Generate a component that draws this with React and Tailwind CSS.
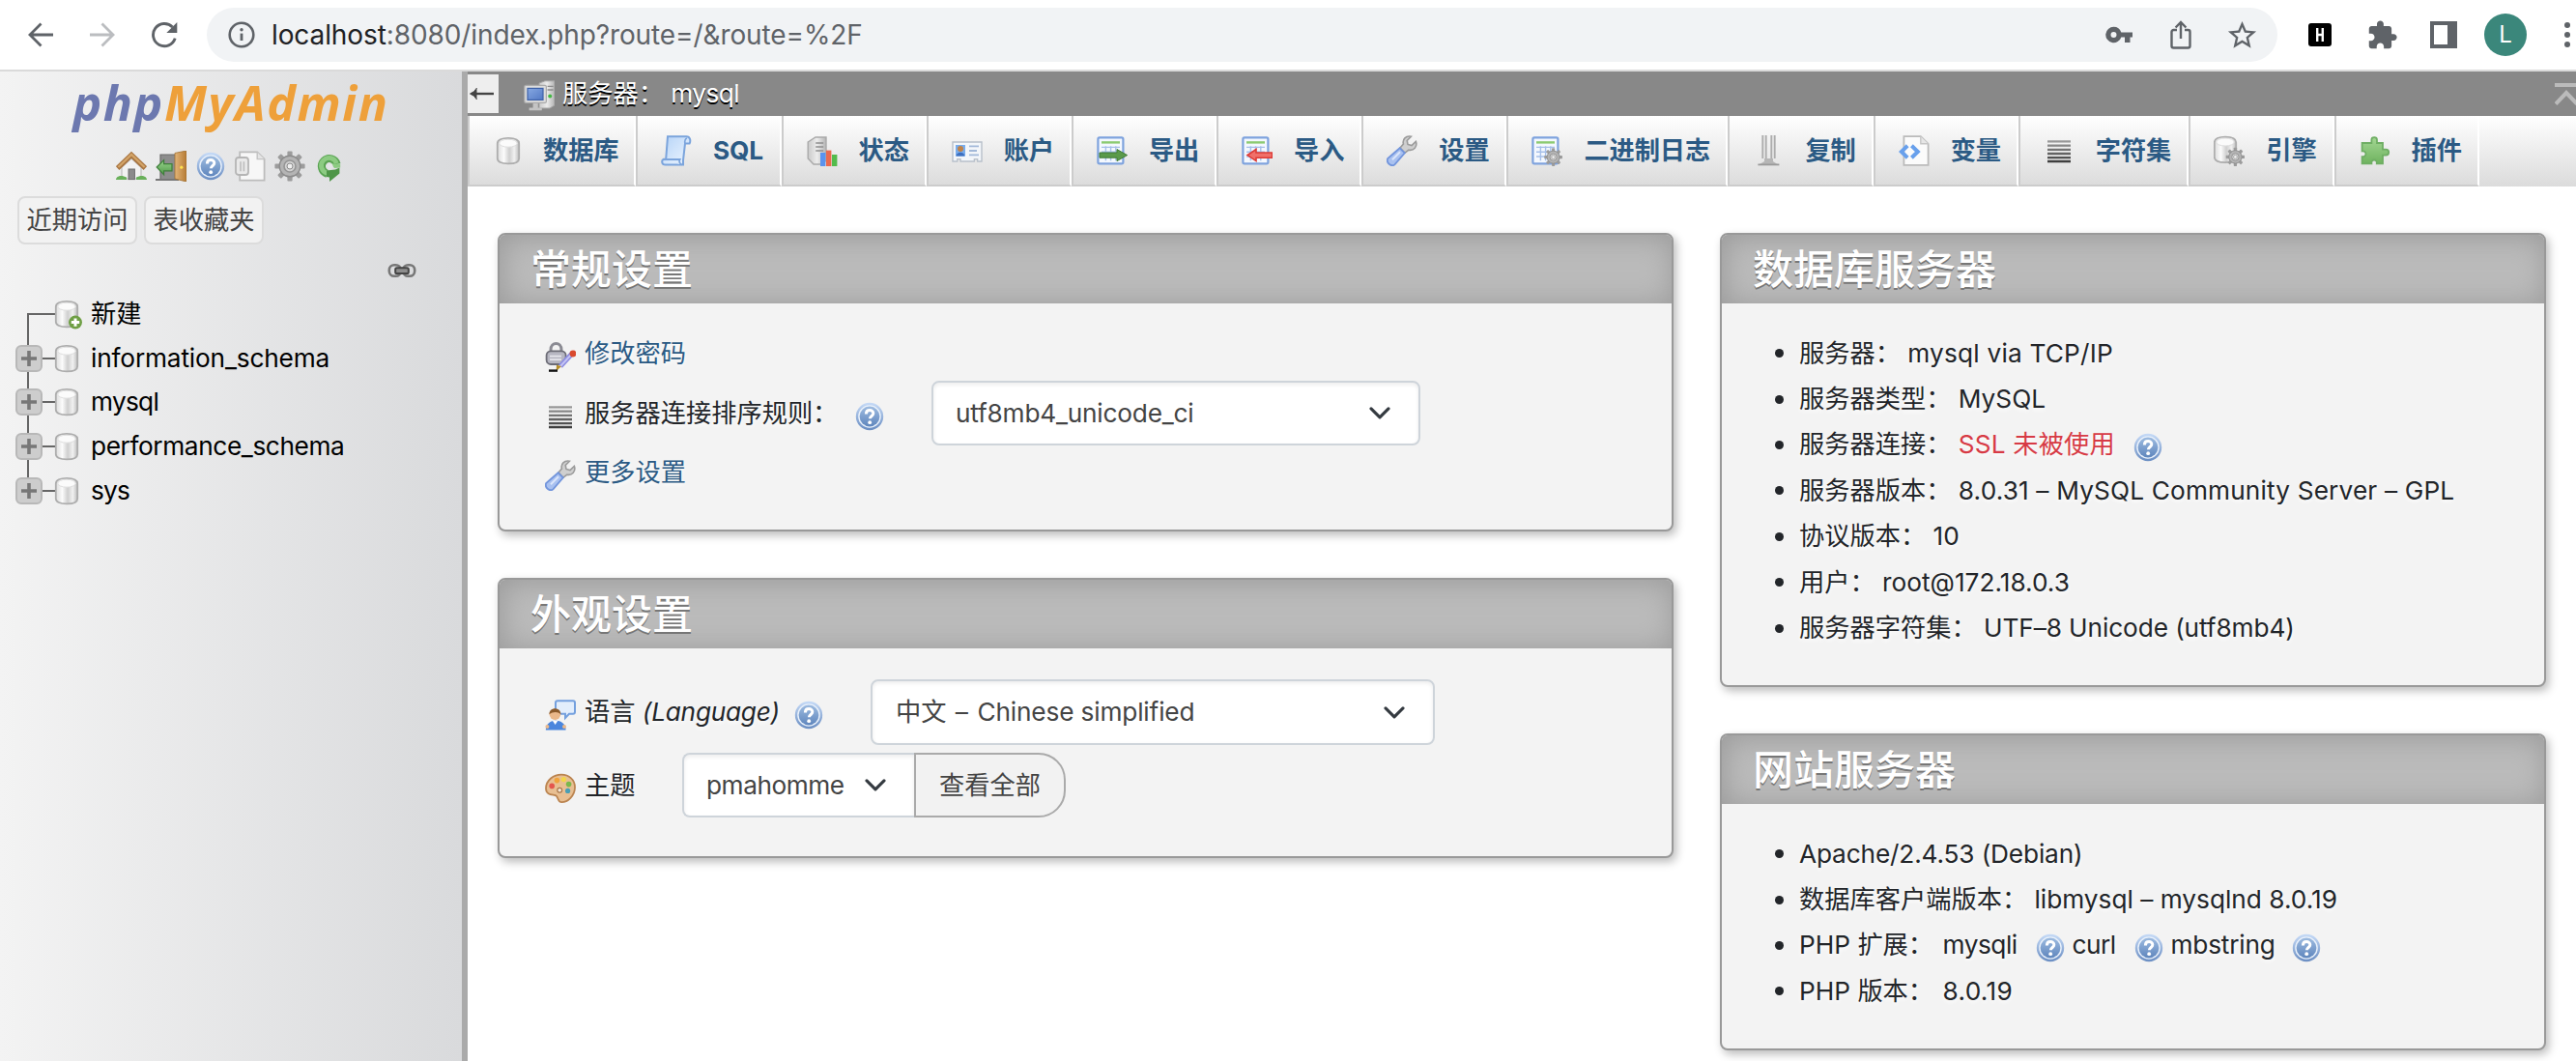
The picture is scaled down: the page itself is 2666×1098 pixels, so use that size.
import React from 'react';

const FONT = "font-[Inter,'Noto_Sans_CJK_SC',sans-serif]";

/* ---------- icon primitives (16 unit grid shown at 32px) ---------- */

function Icon({ children, className = '' }) {
  return (
    <svg viewBox="0 0 16 16" className={`h-8 w-8 shrink-0 ${className}`} fill="none">
      {children}
    </svg>
  );
}

function Defs() {
  return (
    <svg width="0" height="0" className="absolute">
      <defs>
        <linearGradient id="cyl" x1="0" x2="1" y1="0" y2="0">
          <stop offset="0" stopColor="#dcdcdc" />
          <stop offset=".3" stopColor="#fbfbfb" />
          <stop offset=".55" stopColor="#cfcfcf" />
          <stop offset=".78" stopColor="#f1f1f1" />
          <stop offset="1" stopColor="#bdbdbd" />
        </linearGradient>
        <linearGradient id="helpFill" x1="0" x2="0" y1="0" y2="1">
          <stop offset="0" stopColor="#9dbbe0" />
          <stop offset="1" stopColor="#5f86bd" />
        </linearGradient>
        <linearGradient id="helpRing" x1="0" x2="0" y1="0" y2="1">
          <stop offset="0" stopColor="#c3d8f5" />
          <stop offset="1" stopColor="#6d90c4" />
        </linearGradient>
        <linearGradient id="blueSheet" x1="0" x2="1" y1="0" y2="1">
          <stop offset="0" stopColor="#b5d3f7" />
          <stop offset="1" stopColor="#eef6ff" />
        </linearGradient>
        <linearGradient id="grayBox" x1="0" x2="1" y1="0" y2="0">
          <stop offset="0" stopColor="#c9c9c9" />
          <stop offset=".5" stopColor="#ececec" />
          <stop offset="1" stopColor="#b4b4b4" />
        </linearGradient>
        <linearGradient id="lines" x1="0" x2="0" y1="2" y2="14" gradientUnits="userSpaceOnUse">
          <stop offset="0" stopColor="#a2a2a2" />
          <stop offset="1" stopColor="#3c3c3c" />
        </linearGradient>
        <linearGradient id="door" x1="0" x2="1" y1="0" y2="0">
          <stop offset="0" stopColor="#e3b67a" />
          <stop offset="1" stopColor="#b57a33" />
        </linearGradient>
        <linearGradient id="green" x1="0" x2="0" y1="0" y2="1">
          <stop offset="0" stopColor="#9bd48f" />
          <stop offset="1" stopColor="#4f9a48" />
        </linearGradient>
        <linearGradient id="plugin" x1="0" x2="0" y1="0" y2="1">
          <stop offset="0" stopColor="#a3d693" />
          <stop offset="1" stopColor="#6fb35f" />
        </linearGradient>
        <linearGradient id="screen" x1="0" x2="1" y1="0" y2="1">
          <stop offset="0" stopColor="#86a8e2" />
          <stop offset="1" stopColor="#5379c4" />
        </linearGradient>
      </defs>
    </svg>
  );
}

const Cylinder = () => (
  <>
    <path d="M2.4 4.200C2.400 2.400 4.600 1.400 8 1.400s5.600 1 5.600 2.800v7.800c0 1.800-2.200 2.700-5.600 2.700S2.400 13.800 2.400 12z" fill="url(#cyl)" stroke="#adadad" strokeWidth=".9" />
    <ellipse cx="8" cy="4.100" rx="4.600" ry="2" fill="#fbfbfb" stroke="#dedede" strokeWidth=".5" />
  </>
);

const Gear = ({ cx = 8, cy = 8, r = 5 }) => (
  <g transform={`translate(${cx} ${cy}) scale(${r / 5})`}>
    {[0, 45, 90, 135].map((a) => (
      <rect key={a} x="-1.300" y="-7.800" width="2.600" height="15.600" rx=".5" transform={`rotate(${a})`} fill="#9c9c9c" />
    ))}
    <circle r="5.400" fill="#b4b4b4" stroke="#8c8c8c" strokeWidth=".7" />
    <circle r="3" fill="#d2d2d2" stroke="#959595" strokeWidth=".8" />
    <circle r="1.500" fill="#f0f0f0" stroke="#8a8a8a" strokeWidth=".5" />
  </g>
);

const DbIcon = () => <Icon><Cylinder /></Icon>;

const NewDbIcon = () => (
  <Icon>
    <Cylinder />
    <circle cx="12.500" cy="12.300" r="3.500" fill="#6f9f45" />
    <path d="M12.500 10.200v4.200M10.400 12.300h4.200" stroke="#fff" strokeWidth="1.500" />
  </Icon>
);

const HelpIcon = ({ className }) => (
  <Icon className={className}>
    <circle cx="8" cy="8" r="6.500" fill="#e9f1fb" stroke="url(#helpRing)" strokeWidth="1.200" />
    <circle cx="8" cy="8" r="5.200" fill="url(#helpFill)" />
    <path d="M6.200 6.700c0-2.600 3.700-2.400 3.700-.3 0 1.300-1.700 1.400-1.700 2.700" stroke="#fff" strokeWidth="1.500" />
    <circle cx="8.100" cy="11.100" r=".95" fill="#fff" />
  </Icon>
);

const HomeIcon = () => (
  <Icon>
    <path d="M3 8.500 8 4l5 4.500v6H3z" fill="#f2f2f2" stroke="#bdbdbd" strokeWidth=".6" />
    <rect x="6.500" y="9.500" width="3.200" height="5.300" fill="#8b8b8b" stroke="#6d6d6d" strokeWidth=".5" />
    <path d="M.8 9 8 2.200 15.200 9" stroke="#a87440" strokeWidth="2.600" />
    <path d="M1.200 8.500 8 2l6.800 6.500" stroke="#d3a468" strokeWidth="1.200" />
    <path d="M0 15c0-2 3-2.800 5.500-1.200V15zM16 15c0-2-3-2.800-5.500-1.200V15z" fill="#69b05a" />
  </Icon>
);

const ExitIcon = () => (
  <Icon>
    <path d="M2.500 2h8v13h-8z" fill="#8d8d8d" stroke="#6a6a6a" strokeWidth=".6" />
    <path d="M0 15h12" stroke="#777" />
    <path d="M10 1.200 16 0v16l-6-1.500z" fill="url(#door)" stroke="#a06d2d" strokeWidth=".4" />
    <circle cx="13.400" cy="8.600" r=".8" fill="#ffe14d" />
    <path d="M.6 8.500 4.300 4.800v2h4.200v3.600H4.300v2z" fill="url(#green)" stroke="#3f7f3b" strokeWidth=".6" />
  </Icon>
);

const DocIcon = () => (
  <Icon>
    <path d="M2.600.7h9l3.700 3.600v11H2.600z" fill="#f7f7f7" stroke="#bcbcbc" strokeWidth=".9" />
    <path d="M11.600.7v3.600h3.700" fill="#e4e4e4" stroke="#c4c4c4" strokeWidth=".7" />
    <rect x=".5" y="3.500" width="6.500" height="9" rx="1.500" fill="#e9e9e9" stroke="#b5b5b5" strokeWidth=".9" />
    <path d="M3 5.600v5M4.700 5.600v5" stroke="#bdbdbd" strokeWidth=".8" />
  </Icon>
);

const GearIcon = () => <Icon><Gear /></Icon>;

const ReloadGreen = () => (
  <Icon>
    <path d="M11.800 7A4 4 0 1 0 6.800 11.900" stroke="#5aa353" strokeWidth="4" />
    <path d="M11.600 6.600A4 4 0 1 0 6.800 11.600" stroke="#8ccb82" strokeWidth="2.400" />
    <path d="M6.500 10.200 11 9.700l2.200-.9v3L8 16v-2.300l-1.500-.2z" fill="#4f9648" />
    <path d="M8.500 6.800h5.100v1.900l-3 .3z" fill="#8ccb82" />
    <circle cx="8.300" cy="8.100" r="1.500" fill="#e4e5e7" />
  </Icon>
);

const LinkIcon = () => (
  <Icon>
    <rect x="1.400" y="5.100" width="6" height="5.800" rx="2.600" stroke="#777" strokeWidth="1.300" />
    <rect x="8.600" y="5.100" width="6" height="5.800" rx="2.600" stroke="#777" strokeWidth="1.300" />
    <rect x="4.600" y="6.600" width="6.800" height="2.900" rx=".8" fill="#8d8d8d" stroke="#444" strokeWidth="1" />
  </Icon>
);

const ServerIcon = () => (
  <Icon>
    <path d="M8 1.500 11 .4h5V13l-2.500 1.500H8z" fill="url(#grayBox)" stroke="#a3a3a3" strokeWidth=".5" />
    <path d="M12.300 3.200h3M12.300 5h3" stroke="#8d8d8d" strokeWidth=".7" />
    <circle cx="13.600" cy="8.200" r="1" fill="#43b843" />
    <rect x=".4" y="2.700" width="11.300" height="9" rx=".7" fill="#dcdcdc" stroke="#ababab" strokeWidth=".6" />
    <rect x="2" y="4.200" width="8" height="6" fill="url(#screen)" stroke="#3e62a8" strokeWidth=".6" />
    <path d="M4.800 12h2.600v2.300h2v1.300H2.800v-1.300h2z" fill="#c4c4c4" />
  </Icon>
);

const SqlIcon = () => (
  <Icon>
    <path d="M3.500.6h9.700c2 0 2.300 2.300 1.600 3.700h-2.300l-1 8.600v2.400H2.300C.3 15.300.2 13 1.300 12.400h1.300z" fill="url(#blueSheet)" stroke="#7ba4dc" strokeWidth="1" />
    <path d="M1.500 12.500h8.300c-.6 1 0 2.500 1 2.700" fill="#dbeafc" stroke="#7ba4dc" strokeWidth=".9" />
    <path d="M12.500 4.300c-.4-1.500.2-2.600 1-2.800" stroke="#7ba4dc" strokeWidth=".8" />
  </Icon>
);

const StatusIcon = () => (
  <Icon>
    <path d="M.6 3.500 4.500 1h5.500v12L8 15H3.500L.6 12z" fill="url(#grayBox)" stroke="#a9a9a9" strokeWidth=".7" />
    <path d="M4.600 4h4M4.600 6h4M4.600 8h4" stroke="#8f8f8f" strokeWidth=".8" />
    <rect x="7" y="9" width="2.700" height="7" fill="#5b93ee" />
    <rect x="10" y="7.800" width="2.700" height="8.200" fill="#ea6a4f" />
    <rect x="13" y="10" width="2.700" height="6" fill="#53bb4c" />
  </Icon>
);

const UserCardIcon = () => (
  <Icon>
    <path d="M.5 3.500h15v10h-2.200v-1.200h-1.600v1.200H4.500v-1.200H2.900v1.200H.5z" fill="#f3f6fa" stroke="#b8c0ca" strokeWidth=".7" />
    <rect x="2" y="5" width="5" height="5.800" fill="#78acec" />
    <circle cx="4.500" cy="7" r="1.500" fill="#c08348" />
    <path d="M2.300 10.800c0-2.600 4.400-2.600 4.400 0z" fill="#3d6fc0" />
    <path d="M9 5.700h5M9 8h4M9 10.200h5" stroke="#a3b9d9" strokeWidth=".9" />
  </Icon>
);

const Sheet = () => (
  <>
    <rect x=".7" y="1.200" width="13" height="13.500" rx=".8" fill="#f4f8fe" stroke="#7fa3de" strokeWidth="1.100" />
    <path d="M2.500 3.700h9.500" stroke="#8ccb72" strokeWidth="1.200" />
    <path d="M2.500 6.200h9.500M2.500 8.600h9.500M2.500 11h9.500M4.700 5.600v7.500M7.300 5.600v7.500M9.900 5.600v7.500" stroke="#a5bfe9" strokeWidth=".7" />
  </>
);

const ExportIcon = () => (
  <Icon>
    <Sheet />
    <path d="M1.500 9h9V7.300L15.800 10.300l-5.300 3v-1.700h-9z" fill="#5a9a4a" stroke="#3f7a35" strokeWidth=".5" />
  </Icon>
);

const ImportIcon = () => (
  <Icon>
    <Sheet />
    <path d="M15.800 9H7.500V7.300L3 10.300l4.500 3v-1.700h8.300z" fill="#f0706a" stroke="#dd3b36" strokeWidth=".8" />
  </Icon>
);

const WrenchIcon = () => (
  <Icon>
    <path d="M15.200 3.200 13 5.300l-2-.6-.4-2L12.700.6c-2.700-.6-4.600 1.500-4 3.900L7 6.500l2.500 2.600 2-1.500c2.500.5 4.600-1.700 3.700-4.400z" fill="#cfcfcf" stroke="#9b9b9b" strokeWidth=".8" />
    <path d="M6.800 6.600 9.400 9.200 4.200 15.200c-1.500 1.200-4.600-.6-3.600-3.200z" fill="#a9c1f0" stroke="#7295dc" strokeWidth=".9" />
    <path d="M3 12.600 7 8.600" stroke="#dbe6fb" strokeWidth="1" />
  </Icon>
);

const BinlogIcon = () => (
  <Icon><Sheet /><Gear cx={11.300} cy={11.300} r={3} /></Icon>
);

const ReplicationIcon = () => (
  <Icon>
    <path d="M6 0v12M10.500 0v12" stroke="#a8a8a8" strokeWidth="2.600" />
    <path d="M6 0v12M10.500 0v12" stroke="#dedede" strokeWidth="1.100" />
    <path d="M6 12h4.500v1.500l3 2H2.700l3.300-2z" fill="#b6b6b6" />
    <path d="M2.700 15.200h11" stroke="#9a9a9a" strokeWidth=".9" />
  </Icon>
);

const VariablesIcon = () => (
  <Icon>
    <path d="M2.700.6h8.700l3.900 3.800v11H2.700z" fill="#fbfbfb" stroke="#bbb" strokeWidth=".9" />
    <path d="M11.400.6v3.800h3.900" fill="#e6e6e6" stroke="#c6c6c6" strokeWidth=".7" />
    <path d="M4.600 5.400 1.400 8.500l3.200 3.100M6.700 5.400l3.200 3.100-3.200 3.100" stroke="#68a0ec" strokeWidth="2" />
  </Icon>
);

const LinesIcon = () => (
  <Icon>
    <path d="M2 3.200h12M2 5.300h12M2 7.400h12M2 9.500h12M2 11.600h12M2 13.500h12" stroke="url(#lines)" strokeWidth="1.150" />
  </Icon>
);

const EngineIcon = () => (
  <Icon>
    <g transform="translate(-2 -.6)"><Cylinder /></g>
    <Gear cx={11.200} cy={11.200} r={3.100} />
  </Icon>
);

const PluginIcon = () => (
  <Icon>
    <path d="M5 4h1.200V2.300C6.200.6 9 .6 9 2.300V4h3v3.300h1.600c2 0 2 3 0 3H12V14.700H8.900c.4-2.600-3.100-2.600-2.700 0H1.300v-3.600c2.600.3 2.600-3.200 0-2.900V4z" fill="url(#plugin)" stroke="#6fae64" strokeWidth=".9" />
  </Icon>
);

const PasswordIcon = () => (
  <Icon>
    <path d="M3 6.500V4.500C3 .2 8.500.2 8.500 4.500v2" stroke="#8b8b93" strokeWidth="1.500" />
    <rect x=".8" y="5.200" width="10" height="6.800" rx="2.200" fill="#b7b7c2" stroke="#6c6c76" strokeWidth=".9" />
    <path d="M2.500 7.800h6M2.500 9.600h6" stroke="#e6e6ec" strokeWidth=".9" />
    <path d="M14.200 6.300 8 13" stroke="#8c8ce0" strokeWidth="2.600" />
    <path d="M14.200 6.300 8 13" stroke="#c5c5f4" strokeWidth="1" />
    <circle cx="14.500" cy="6.500" r="1.700" fill="#d9492e" />
    <path d="M6 12.400 8.500 13 5.800 15.600z" fill="#b58b24" />
    <path d="M2 15.300h4.500" stroke="#111" strokeWidth="1.200" />
  </Icon>
);

const LanguageIcon = () => (
  <Icon>
    <path d="M6.500.6h8c.7 0 1 .3 1 1v4.800c0 .7-.3 1-1 1h-2L10.500 9.500V7.400h-4c-.7 0-1-.3-1-1V1.600c0-.7.3-1 1-1z" fill="#e3eefc" stroke="#74a0de" strokeWidth="1" />
    <circle cx="5.200" cy="7.600" r="2.900" fill="#eab88a" />
    <path d="M2.200 7.600c0-4 6-4 6 0-1.500-1.500-4-1.500-6 0z" fill="#8a5a2b" />
    <path d="M.4 15.800c0-6.500 10.400-6.500 10.400 0z" fill="#4b86dd" />
    <path d="M4 11h2.600l-1.300 2z" fill="#fff" />
    <circle cx="1.200" cy="14" r="1" fill="#eab88a" /><circle cx="10" cy="14" r="1" fill="#eab88a" />
  </Icon>
);

const PaletteIcon = () => (
  <Icon>
    <path d="M8.500.8c4 0 7.100 2.700 7 6.700-.1 4.300-3.700 7.600-6.800 7.600-2.200 0-1.700-2.200-2.700-3.200S.5 12 .5 7.900C.6 3.600 4.500.8 8.500.8z" fill="#e8bf92" stroke="#bb8450" strokeWidth=".9" />
    <circle cx="3.600" cy="6.700" r="1.400" fill="#e4554d" />
    <circle cx="6.200" cy="3.800" r="1.400" fill="#f0a33c" />
    <circle cx="9.700" cy="3.300" r="1.300" fill="#f2d648" />
    <circle cx="12.300" cy="5.800" r="1.400" fill="#79b84c" />
    <circle cx="11.800" cy="9.200" r="1.300" fill="#4a9fb5" />
    <circle cx="7.600" cy="8.900" r="1.200" fill="#f6ead9" stroke="#a9764a" strokeWidth=".6" />
  </Icon>
);

/* ---------- browser toolbar ---------- */

function BrowserBar() {
  return (
    <div className="flex h-[74px] shrink-0 items-center border-b-2 border-[#dadada] bg-white text-[#5f6368]">
      <svg viewBox="0 0 26 26" className="ml-[29px] h-[26px] w-[26px]" fill="none" stroke="#5f6368" strokeWidth="2.800">
        <path d="M26 13H2.500M13.500 1.500 2 13l11.500 11.500" />
      </svg>
      <svg viewBox="0 0 26 26" className="ml-[38px] h-[26px] w-[26px]" fill="none" stroke="#bbbdc0" strokeWidth="2.800">
        <path d="M0 13h23.500M12.500 1.500 24 13 12.500 24.500" />
      </svg>
      <svg viewBox="0 0 28 28" className="ml-[37px] h-7 w-7" fill="none">
        <path d="M25.200 17.600A11.600 11.600 0 1 1 22.500 6.100" stroke="#5f6368" strokeWidth="2.900" />
        <path d="M27.300 1v11H16.300z" fill="#5f6368" />
      </svg>
      <div className="ml-[30px] flex h-14 w-[2143px] items-center rounded-full bg-[#f1f3f5]">
        <svg viewBox="0 0 28 28" className="ml-[22px] h-7 w-7" fill="none">
          <circle cx="14" cy="14" r="12.300" stroke="#5f6368" strokeWidth="2.600" />
          <path d="M14 12.600v7.400" stroke="#5f6368" strokeWidth="2.800" />
          <circle cx="14" cy="8.800" r="1.700" fill="#5f6368" />
        </svg>
        <div className="ml-[17px] flex-1 whitespace-pre text-[28px] leading-8 tracking-[-0.1px] text-[#5f6368]"><span className="text-[#202124]">localhost</span>:8080/index.php?route=/&amp;route=%2F</div>
        <svg viewBox="0 0 28 18" className="h-[18px] w-7" fill="#5f6368">
          <path fillRule="evenodd" d="M8.500.8a8.200 8.200 0 0 1 7.800 5.600H28v5h-2.500V17H20v-5.600h-3.700A8.200 8.200 0 1 1 8.500.8zm0 5.200a3 3 0 1 0 0 6 3 3 0 0 0 0-6z" />
        </svg>
        <svg viewBox="0 0 22 30" className="ml-[39px] h-[30px] w-[22px]" fill="none" stroke="#5f6368" strokeWidth="2.400">
          <path d="M7 10H3.500a2 2 0 0 0-2 2v14.500a2 2 0 0 0 2 2h15a2 2 0 0 0 2-2V12a2 2 0 0 0-2-2H15M11 19V2.500M5.600 7.500 11 2l5.400 5.500" />
        </svg>
        <svg viewBox="0 0 24 24" className="ml-[35px] mr-[19px] h-[35px] w-[35px]" fill="#5f6368">
          <path d="M22 9.240l-7.190-.62L12 2 9.190 8.630 2 9.240l5.460 4.730L5.820 21 12 17.270 18.180 21l-1.630-7.030L22 9.240zM12 15.400l-3.760 2.270 1-4.280-3.320-2.880 4.380-.38L12 6.100l1.710 4.040 4.380.38-3.320 2.880 1 4.280L12 15.400z" />
        </svg>
      </div>
      <div className="ml-8 flex h-6 w-6 items-center justify-center rounded-[3px] bg-black">
        <svg viewBox="0 0 8 14" className="h-[14px] w-2" stroke="#fff" strokeWidth="2.400"><path d="M1.200 0v14M6.800 0v14M1 7h6" /></svg>
      </div>
      <svg viewBox="0 0 24 24" className="ml-[36px] h-[33px] w-[33px]" fill="#5f6368">
        <path d="M20.500 11H19V7c0-1.100-.9-2-2-2h-4V3.500C13 2.120 11.880 1 10.500 1S8 2.120 8 3.500V5H4c-1.100 0-1.990.9-1.990 2v3.800H3.500c1.490 0 2.700 1.210 2.700 2.700s-1.210 2.700-2.700 2.700H2V20c0 1.100.9 2 2 2h3.800v-1.500c0-1.490 1.210-2.700 2.700-2.700 1.490 0 2.700 1.210 2.700 2.700V22H17c1.100 0 2-.9 2-2v-4h1.500c1.380 0 2.500-1.120 2.500-2.500S21.880 11 20.500 11z" />
      </svg>
      <div className="ml-[33px] flex h-7 w-7 items-stretch bg-[#5f6368] p-1 pr-[10px]"><div className="flex-1 bg-white" /></div>
      <div className="ml-7 flex h-11 w-11 items-center justify-center rounded-full bg-[#3b877b] text-[24px] font-normal leading-none text-white">L</div>
      <div className="ml-[39px] flex flex-col gap-1">
        <div className="h-1.5 w-1.5 rounded-full bg-[#5f6368]" />
        <div className="h-1.5 w-1.5 rounded-full bg-[#5f6368]" />
        <div className="h-1.5 w-1.5 rounded-full bg-[#5f6368]" />
      </div>
    </div>
  );
}

/* ---------- navigation sidebar ---------- */

const DATABASES = [
  { name: 'information_schema', cls: 'tracking-[-0.16px]' },
  { name: 'mysql', cls: 'tracking-[-0.7px]' },
  { name: 'performance_schema', cls: 'tracking-[-0.39px]' },
  { name: 'sys', cls: 'tracking-[-0.8px]' },
];

function Sidebar() {
  return (
    <aside className="flex w-[478px] shrink-0 flex-col bg-linear-to-r from-[#f3f3f3] to-[#d9dadc]">
      <div className="flex h-[82px] justify-center">
        <div className="whitespace-nowrap font-['Open_Sans',sans-serif] text-[50px] font-bold italic leading-[64px] tracking-[1.600px]">
          <span className="text-[#6c78af]">php</span><span className="text-[#eea03a]">MyAdmin</span>
        </div>
      </div>
      <div className="ml-[120px] flex gap-[9px]">
        <HomeIcon /><ExitIcon /><HelpIcon /><DocIcon /><GearIcon /><ReloadGreen />
      </div>
      <div className="ml-[18px] mt-[15px] flex gap-[7px] text-[26.240px] text-[#444]">
        {['近期访问', '表收藏夹'].map((t) => (
          <div key={t} className="flex h-[50px] w-[124px] items-center justify-center whitespace-nowrap rounded-lg border-2 border-[#dcdcdc] bg-[#f2f2f2]">{t}</div>
        ))}
      </div>
      <div className="ml-[400px] mt-[11px] h-8"><LinkIcon /></div>
      <div className="mt-[6px] flex flex-col text-[26.240px] leading-8 text-black">
        <div className="flex h-[45.750px] items-center">
          <div className="ml-[28px] flex h-full w-[29px] flex-col">
            <div className="h-[22px]" />
            <div className="flex-1 border-l-2 border-t-2 border-[#666]" />
          </div>
          <div className="-ml-1"><NewDbIcon /></div>
          <div className="ml-[9px]">新建</div>
        </div>
        {DATABASES.map((d, i) => (
          <div key={d.name} className="flex h-[45.750px] items-center">
            <div className="ml-4 flex h-full w-7 flex-col">
              <div className="ml-3 w-0.5 flex-1 bg-[#666]" />
              <div className="flex h-7 w-7 items-center justify-center rounded-[6px] border-2 border-[#b8b8b8] bg-[#cdcdcd]">
                <svg viewBox="0 0 16 16" className="h-4 w-4" stroke="#777" strokeWidth="3.600"><path d="M8 0v16M0 8h16" /></svg>
              </div>
              <div className={i < DATABASES.length - 1 ? 'ml-3 w-0.5 flex-1 bg-[#666]' : 'flex-1'} />
            </div>
            <div className="h-0.5 w-[13px] bg-[#666]" />
            <div className="-ml-1"><DbIcon /></div>
            <div className={`ml-[9px] whitespace-nowrap ${d.cls}`}>{d.name}</div>
          </div>
        ))}
      </div>
    </aside>
  );
}

/* ---------- top tabs ---------- */

const TABS = [
  { label: '数据库', Ic: DbIcon, w: 'w-[174px] border-l-0 pl-6 -indent-0.5' },
  { label: 'SQL', Ic: SqlIcon, w: 'w-[150.500px] pl-6' },
  { label: '状态', Ic: StatusIcon, w: 'w-[150.200px] pl-6' },
  { label: '账户', Ic: UserCardIcon, w: 'w-[150.200px] pl-6' },
  { label: '导出', Ic: ExportIcon, w: 'w-[150.200px] pl-6' },
  { label: '导入', Ic: ImportIcon, w: 'w-[150.200px] pl-6' },
  { label: '设置', Ic: WrenchIcon, w: 'w-[150.200px] pl-6' },
  { label: '二进制日志', Ic: BinlogIcon, w: 'w-[229px] pl-6' },
  { label: '复制', Ic: ReplicationIcon, w: 'w-[150.200px] pl-6' },
  { label: '变量', Ic: VariablesIcon, w: 'w-[150.200px] pl-6' },
  { label: '字符集', Ic: LinesIcon, w: 'w-[176.500px] pl-6' },
  { label: '引擎', Ic: EngineIcon, w: 'w-[150.200px] pl-6' },
  { label: '插件', Ic: PluginIcon, w: 'w-[150.200px] pl-6' },
];

function Tabs() {
  return (
    <nav className="flex h-[73px] bg-linear-to-b from-white to-[#dbdbdb]">
      {TABS.map(({ label, Ic, w }) => (
        <div key={label} className={`flex shrink-0 items-center border-b-2 border-l-2 border-r-2 border-b-[#ccc] border-l-[#ccc] border-r-white ${w}`}>
          <Ic />
          <div className="ml-[22px] whitespace-nowrap text-[26.240px] font-bold leading-8 tracking-[-0.1px] text-[#2b5a84]">{label}</div>
        </div>
      ))}
    </nav>
  );
}

/* ---------- cards ---------- */

function Card({ title, className, children }) {
  return (
    <section className={`flex flex-col overflow-hidden rounded-lg border-2 border-[#999] bg-[#f3f3f3] shadow-[3px_4px_10px_#bbb] ${className}`}>
      <h2 className="flex h-[71px] shrink-0 items-center bg-[#bbb] pl-8 text-[42px] font-medium leading-[48px] text-white shadow-[inset_2px_2px_30px_#999] [text-shadow:0_2px_0_#777]">{title}</h2>
      <div className="flex flex-1 flex-col text-[26.240px] leading-8 text-[#222529] [text-shadow:0_2px_4px_#fff]">{children}</div>
    </section>
  );
}

const Chevron = ({ className = '' }) => (
  <svg viewBox="0 0 24 14" className={`h-[13px] w-[22px] shrink-0 ${className}`} fill="none" stroke="#343a40" strokeWidth="3.400" strokeLinecap="round" strokeLinejoin="round">
    <path d="M2.200 2 12 11.800 21.800 2" />
  </svg>
);

function Select({ children, className }) {
  return (
    <div className={`flex items-center justify-between border-2 border-[#ced4da] bg-white text-[#444] shadow-[inset_0_2px_4px_rgba(0,0,0,0.08)] [text-shadow:none] ${className}`}>
      {children}
    </div>
  );
}

function Bullet({ children }) {
  return (
    <li className="flex h-[47.400px] items-center whitespace-pre">
      <span className="mr-4 h-[9px] w-[9px] rounded-full bg-[#222529]" />
      {children}
    </li>
  );
}

function GeneralCard() {
  return (
    <Card title="常规设置" className="h-[309px]">
      <div className="ml-[47px] mt-[28px] flex h-12 items-center">
        <div className="pt-1.5"><PasswordIcon /></div>
        <span className="ml-[9px] text-[#2b5a84]">修改密码</span>
      </div>
      <div className="ml-[47px] mt-1 flex h-[67px] items-center">
        <div className="pt-1.5"><LinesIcon /></div>
        <span className="ml-[9px] w-[279px] whitespace-nowrap">服务器连接排序规则：</span>
        <HelpIcon className="mt-1.5" />
        <Select className="ml-12 h-[67px] w-[506px] rounded-lg pl-[23px] pr-[29px]">
          <span className="tracking-[-0.2px]">utf8mb4_unicode_ci</span>
          <Chevron />
        </Select>
      </div>
      <div className="ml-[47px] mt-1 flex h-12 items-center">
        <div className="pt-1.5"><WrenchIcon /></div>
        <span className="ml-[9px] text-[#2b5a84]">更多设置</span>
      </div>
    </Card>
  );
}

function AppearanceCard() {
  return (
    <Card title="外观设置" className="mt-12 h-[290px]">
      <div className="ml-[47px] mt-8 flex h-[68px] items-center">
        <div className="pt-1.5"><LanguageIcon /></div>
        <span className="ml-[9px] w-[216px] whitespace-pre">语言 <i className="tracking-[-0.25px]">(Language)</i></span>
        <HelpIcon className="mt-1.5" />
        <Select className="ml-12 h-[68px] w-[584px] rounded-lg pl-6 pr-[29px]">
          <span className="whitespace-pre">中文 <span className="mx-0.5">–</span> <span className="tracking-[-0.15px]">Chinese simplified</span></span>
          <Chevron />
        </Select>
      </div>
      <div className="ml-[47px] mt-2 flex h-[67px] items-center">
        <div className="pt-1.5"><PaletteIcon /></div>
        <span className="ml-[9px] w-[101px]">主题</span>
        <Select className="h-[67px] w-[240px] rounded-l-lg border-r-0 pl-[23px] pr-[29px]">
          <span className="tracking-[-0.45px]">pmahomme</span>
          <Chevron />
        </Select>
        <div className="flex h-[67px] w-[157px] items-center justify-center whitespace-nowrap rounded-r-[28px] border-2 border-[#aaa] bg-[#f2f2f2] text-[#444] [text-shadow:none]">查看全部</div>
      </div>
    </Card>
  );
}

function DatabaseServerCard() {
  return (
    <Card title="数据库服务器" className="h-[470px]">
      <ul className="ml-[55px] mt-[28px] flex flex-col">
        <Bullet>服务器： <span className="tracking-[0.19px]">mysql via TCP/IP</span></Bullet>
        <Bullet>服务器类型： <span>MySQL</span></Bullet>
        <Bullet>服务器连接： <span className="text-[#d73a45] tracking-[0.15px]">SSL 未被使用</span><HelpIcon className="ml-[18px] mt-1.5" /></Bullet>
        <Bullet>服务器版本： <span className="tracking-[0.15px]">8.0.31 – MySQL Community Server – GPL</span></Bullet>
        <Bullet>协议版本： <span>10</span></Bullet>
        <Bullet>用户： <span>root@172.18.0.3</span></Bullet>
        <Bullet>服务器字符集： <span className="tracking-[-0.1px]">UTF–8 Unicode (utf8mb4)</span></Bullet>
      </ul>
    </Card>
  );
}

function WebServerCard() {
  return (
    <Card title="网站服务器" className="mt-12 h-[328px]">
      <ul className="ml-[55px] mt-[28px] flex flex-col">
        <Bullet><span className="tracking-[-0.15px]">Apache/2.4.53 (Debian)</span></Bullet>
        <Bullet>数据库客户端版本： <span>libmysql – mysqlnd 8.0.19</span></Bullet>
        <Bullet>
          <span className="w-[148.500px]">PHP 扩展： </span>
          <span className="w-[95px] tracking-[-0.45px]">mysqli</span><HelpIcon className="mt-1.5" />
          <span className="ml-[7px] w-[63px] tracking-[-0.5px]">curl</span><HelpIcon className="mt-1.5" />
          <span className="ml-[7px] w-[124.500px] tracking-[-0.2px]">mbstring</span><HelpIcon className="mt-1.5" />
        </Bullet>
        <Bullet><span className="w-[148.500px]">PHP 版本： </span><span className="tracking-[0.3px]">8.0.19</span></Bullet>
      </ul>
    </Card>
  );
}

/* ---------- page ---------- */

export default function App() {
  return (
    <div className={`flex h-[1098px] w-[2666px] flex-col overflow-hidden bg-white ${FONT}`}>
      <Defs />
      <BrowserBar />
      <div className="flex min-h-0 flex-1">
        <Sidebar />
        <div className="w-1.5 shrink-0 bg-[#aaa]" />
        <main className="flex min-w-0 flex-1 flex-col">
          <header className="flex h-[46px] shrink-0 items-center overflow-hidden bg-[#888]">
            <div className="flex h-10 w-8 items-center bg-[#eee] pl-px">
              <svg viewBox="0 0 26 14" className="h-[14px] w-[26px]" fill="none" stroke="#444" strokeWidth="2.400"><path d="M26 7H3" /><path d="M8.500 1Q6 5.500 1.500 7 6 8.500 8.500 13" fill="#444" strokeWidth="1" /></svg>
            </div>
            <div className="ml-[26px] pt-1"><ServerIcon /></div>
            <div className="ml-2 flex-1 whitespace-pre text-[26.240px] leading-8 text-white [text-shadow:0_2px_0_#000]">服务器： <span className="tracking-[-0.6px]">mysql</span></div>
            <svg viewBox="0 0 22 24" className="h-6 w-[22px]" fill="none" stroke="#bbb">
              <path d="M0 3h22" strokeWidth="4" /><path d="M1 22.500 12 11l11 11.500" strokeWidth="4" />
            </svg>
          </header>
          <Tabs />
          <div className="flex flex-1 gap-12 pl-[31px] pt-12">
            <div className="flex w-[1217px] flex-col"><GeneralCard /><AppearanceCard /></div>
            <div className="flex w-[855px] flex-col"><DatabaseServerCard /><WebServerCard /></div>
          </div>
        </main>
      </div>
    </div>
  );
}
